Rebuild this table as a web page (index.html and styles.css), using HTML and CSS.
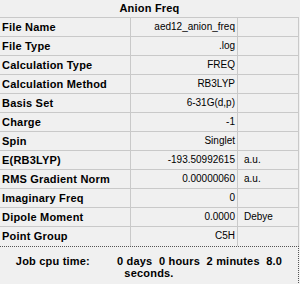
FILE: index.html
```html
<!DOCTYPE html>
<html>
<head>
<meta charset="utf-8">
<link rel="stylesheet" href="styles.css">
</head>
<body>
<div class="panel">
  <div class="title">Anion Freq</div>
  <div class="grid">
    <div class="lab">File Name</div><div class="val">aed12_anion_freq</div><div class="unit"></div>
    <div class="lab">File Type</div><div class="val">.log</div><div class="unit"></div>
    <div class="lab">Calculation Type</div><div class="val">FREQ</div><div class="unit"></div>
    <div class="lab">Calculation Method</div><div class="val">RB3LYP</div><div class="unit"></div>
    <div class="lab">Basis Set</div><div class="val">6-31G(d,p)</div><div class="unit"></div>
    <div class="lab">Charge</div><div class="val">-1</div><div class="unit"></div>
    <div class="lab">Spin</div><div class="val">Singlet</div><div class="unit"></div>
    <div class="lab">E(RB3LYP)</div><div class="val">-193.50992615</div><div class="unit">a.u.</div>
    <div class="lab">RMS Gradient Norm</div><div class="val">0.00000060</div><div class="unit">a.u.</div>
    <div class="lab">Imaginary Freq</div><div class="val">0</div><div class="unit"></div>
    <div class="lab">Dipole Moment</div><div class="val">0.0000</div><div class="unit">Debye</div>
    <div class="lab last">Point Group</div><div class="val last">C5H</div><div class="unit last"></div>
  </div>
  <div class="job">
    <div class="jline">Job cpu time:<span class="jv">0 days  0 hours  2 minutes  8.0</span></div>
    <div class="jline">seconds.</div>
  </div>
</div>
</body>
</html>
```
FILE: styles.css
```css
html, body {
  margin: 0;
  padding: 0;
  background: #f0f0f0;
}
.panel {
  width: 299px;
  height: 284px;
  background: #f0f0f0;
  font-family: "Liberation Sans", Arial, sans-serif;
  color: #000;
  overflow: hidden;
}
.title {
  box-sizing: border-box;
  height: 18px;
  border-bottom: 1px solid #c9c9c9;
  text-align: center;
  font-weight: bold;
  font-size: 11px;
  letter-spacing: 0.2px;
  line-height: 17px;
}
.grid {
  display: grid;
  grid-template-columns: 131px 107px 61px;
  grid-auto-rows: 19px;
}
.grid > div {
  box-sizing: border-box;
  border-bottom: 1px solid #c9c9c9;
  line-height: 18px;
  white-space: nowrap;
}
.grid > div.last {
  border-bottom: none;
}
.lab {
  border-right: 1px solid #c9c9c9;
  padding-left: 2px;
  font-weight: bold;
  font-size: 11px;
  letter-spacing: 0.2px;
}
.val {
  border-right: 1px solid #c9c9c9;
  text-align: right;
  padding-right: 2px;
  font-size: 10px;
}
.unit {
  border-right: 1px solid #c9c9c9;
  padding-left: 6px;
  font-size: 10px;
}
.job {
  box-sizing: border-box;
  height: 39px;
  border-top: 1px dotted #555;
  border-right: 1px dotted #555;
  padding-top: 8px;
  font-weight: bold;
  font-size: 11px;
  letter-spacing: 0.2px;
  line-height: 12px;
}
.jline {
  text-align: center;
  white-space: pre;
}
.jv {
  margin-left: 27px;
}
```
